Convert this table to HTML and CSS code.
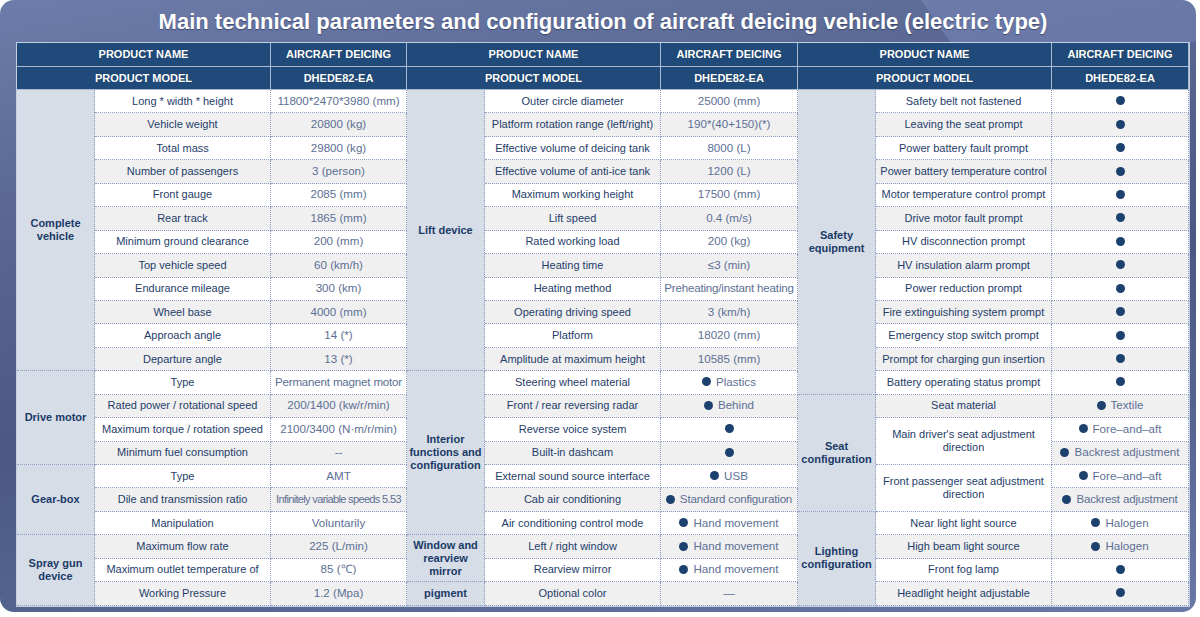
FILE: index.html
```html
<!DOCTYPE html>
<html lang="en">
<head>
<meta charset="utf-8">
<title>Aircraft deicing vehicle parameters</title>
<link rel="stylesheet" href="styles.css">
</head>
<body>
<div class="panel">
  <h1 class="title">Main technical parameters and configuration of aircraft deicing vehicle (electric type)</h1>
  <div class="spec">
    <div class="hd s-2">PRODUCT NAME</div><div class="hd">AIRCRAFT DEICING</div>
    <div class="hd s-2">PRODUCT NAME</div><div class="hd">AIRCRAFT DEICING</div>
    <div class="hd s-2">PRODUCT NAME</div><div class="hd">AIRCRAFT DEICING</div>
    <div class="hd s-2">PRODUCT MODEL</div><div class="hd">DHEDE82-EA</div>
    <div class="hd s-2">PRODUCT MODEL</div><div class="hd">DHEDE82-EA</div>
    <div class="hd s-2">PRODUCT MODEL</div><div class="hd">DHEDE82-EA</div>

    <!-- row 1 -->
    <div class="cat r12">Complete<br>vehicle</div><div class="nm">Long * width * height</div><div class="vl">11800*2470*3980 (mm)</div>
    <div class="cat r12">Lift device</div><div class="nm">Outer circle diameter</div><div class="vl">25000 (mm)</div>
    <div class="cat r13">Safety<br>equipment</div><div class="nm">Safety belt not fastened</div><div class="vl"><span class="dot"></span></div>
    <!-- row 2 -->
    <div class="nm g">Vehicle weight</div><div class="vl g">20800 (kg)</div>
    <div class="nm g">Platform rotation range (left/right)</div><div class="vl g">190*(40+150)(*)</div>
    <div class="nm g">Leaving the seat prompt</div><div class="vl g"><span class="dot"></span></div>
    <!-- row 3 -->
    <div class="nm">Total mass</div><div class="vl">29800 (kg)</div>
    <div class="nm">Effective volume of deicing tank</div><div class="vl">8000 (L)</div>
    <div class="nm">Power battery fault prompt</div><div class="vl"><span class="dot"></span></div>
    <!-- row 4 -->
    <div class="nm g">Number of passengers</div><div class="vl g">3 (person)</div>
    <div class="nm g">Effective volume of anti-ice tank</div><div class="vl g">1200 (L)</div>
    <div class="nm g">Power battery temperature control</div><div class="vl g"><span class="dot"></span></div>
    <!-- row 5 -->
    <div class="nm">Front gauge</div><div class="vl">2085 (mm)</div>
    <div class="nm">Maximum working height</div><div class="vl">17500 (mm)</div>
    <div class="nm">Motor temperature control prompt</div><div class="vl"><span class="dot"></span></div>
    <!-- row 6 -->
    <div class="nm g">Rear track</div><div class="vl g">1865 (mm)</div>
    <div class="nm g">Lift speed</div><div class="vl g">0.4 (m/s)</div>
    <div class="nm g">Drive motor fault prompt</div><div class="vl g"><span class="dot"></span></div>
    <!-- row 7 -->
    <div class="nm">Minimum ground clearance</div><div class="vl">200 (mm)</div>
    <div class="nm">Rated working load</div><div class="vl">200 (kg)</div>
    <div class="nm">HV disconnection prompt</div><div class="vl"><span class="dot"></span></div>
    <!-- row 8 -->
    <div class="nm g">Top vehicle speed</div><div class="vl g">60 (km/h)</div>
    <div class="nm g">Heating time</div><div class="vl g">≤3 (min)</div>
    <div class="nm g">HV insulation alarm prompt</div><div class="vl g"><span class="dot"></span></div>
    <!-- row 9 -->
    <div class="nm">Endurance mileage</div><div class="vl">300 (km)</div>
    <div class="nm">Heating method</div><div class="vl tight">Preheating/instant heating</div>
    <div class="nm">Power reduction prompt</div><div class="vl"><span class="dot"></span></div>
    <!-- row 10 -->
    <div class="nm g">Wheel base</div><div class="vl g">4000 (mm)</div>
    <div class="nm g">Operating driving speed</div><div class="vl g">3 (km/h)</div>
    <div class="nm g">Fire extinguishing system prompt</div><div class="vl g"><span class="dot"></span></div>
    <!-- row 11 -->
    <div class="nm">Approach angle</div><div class="vl">14 (*)</div>
    <div class="nm">Platform</div><div class="vl">18020 (mm)</div>
    <div class="nm">Emergency stop switch prompt</div><div class="vl"><span class="dot"></span></div>
    <!-- row 12 -->
    <div class="nm g">Departure angle</div><div class="vl g">13 (*)</div>
    <div class="nm g">Amplitude at maximum height</div><div class="vl g">10585 (mm)</div>
    <div class="nm g">Prompt for charging gun insertion</div><div class="vl g"><span class="dot"></span></div>
    <!-- row 13 -->
    <div class="cat r4">Drive motor</div><div class="nm">Type</div><div class="vl tight">Permanent magnet motor</div>
    <div class="cat r7">Interior<br>functions and<br>configuration</div><div class="nm">Steering wheel material</div><div class="vl"><span class="dot lead"></span>Plastics</div>
    <div class="nm">Battery operating status prompt</div><div class="vl"><span class="dot"></span></div>
    <!-- row 14 -->
    <div class="nm g">Rated power / rotational speed</div><div class="vl g">200/1400 (kw/r/min)</div>
    <div class="nm g">Front / rear reversing radar</div><div class="vl g"><span class="dot lead"></span>Behind</div>
    <div class="cat r5">Seat<br>configuration</div><div class="nm g">Seat material</div><div class="vl g"><span class="dot lead"></span>Textile</div>
    <!-- row 15 -->
    <div class="nm">Maximum torque / rotation speed</div><div class="vl">2100/3400 (N·m/r/min)</div>
    <div class="nm">Reverse voice system</div><div class="vl"><span class="dot"></span></div>
    <div class="nm r2">Main driver's seat adjustment direction</div><div class="vl"><span class="dot lead"></span>Fore–and–aft</div>
    <!-- row 16 -->
    <div class="nm g">Minimum fuel consumption</div><div class="vl g">--</div>
    <div class="nm g">Built-in dashcam</div><div class="vl g"><span class="dot"></span></div>
    <div class="vl g"><span class="dot lead"></span>Backrest adjustment</div>
    <!-- row 17 -->
    <div class="cat r3">Gear-box</div><div class="nm">Type</div><div class="vl">AMT</div>
    <div class="nm">External sound source interface</div><div class="vl"><span class="dot lead"></span>USB</div>
    <div class="nm r2">Front passenger seat adjustment direction</div><div class="vl"><span class="dot lead"></span>Fore–and–aft</div>
    <!-- row 18 -->
    <div class="nm g">Dile and transmission ratio</div><div class="vl g narrow">Infinitely variable speeds 5.53</div>
    <div class="nm g">Cab air conditioning</div><div class="vl g tight"><span class="dot lead"></span>Standard configuration</div>
    <div class="vl g tight"><span class="dot lead"></span>Backrest adjustment</div>
    <!-- row 19 -->
    <div class="nm">Manipulation</div><div class="vl">Voluntarily</div>
    <div class="nm">Air conditioning control mode</div><div class="vl"><span class="dot lead"></span>Hand movement</div>
    <div class="cat r4">Lighting<br>configuration</div><div class="nm">Near light light source</div><div class="vl"><span class="dot lead"></span>Halogen</div>
    <!-- row 20 -->
    <div class="cat r3">Spray gun<br>device</div><div class="nm g">Maximum flow rate</div><div class="vl g">225 (L/min)</div>
    <div class="cat r2">Window and<br>rearview<br>mirror</div><div class="nm g">Left / right window</div><div class="vl g"><span class="dot lead"></span>Hand movement</div>
    <div class="nm g">High beam light source</div><div class="vl g"><span class="dot lead"></span>Halogen</div>
    <!-- row 21 -->
    <div class="nm">Maximum outlet temperature of</div><div class="vl">85 (℃)</div>
    <div class="nm">Rearview mirror</div><div class="vl"><span class="dot lead"></span>Hand movement</div>
    <div class="nm">Front fog lamp</div><div class="vl"><span class="dot"></span></div>
    <!-- row 22 -->
    <div class="nm g">Working Pressure</div><div class="vl g">1.2 (Mpa)</div>
    <div class="cat">pigment</div><div class="nm g">Optional color</div><div class="vl g">—</div>
    <div class="nm g">Headlight height adjustable</div><div class="vl g"><span class="dot"></span></div>
  </div>
</div>
</body>
</html>
```

FILE: styles.css
```css
* { box-sizing: border-box; }
html, body { margin: 0; padding: 0; background: #ffffff; }
body { font-family: "Liberation Sans", Arial, sans-serif; }

.panel {
  width: 1196px;
  height: 612px;
  border-radius: 14px;
  padding: 0 6px 0 16px;
  background:
    linear-gradient(55deg, rgba(0,0,0,0) 0%, rgba(0,0,0,0) 77.5%, rgba(120,135,185,0.55) 77.6%, rgba(120,135,185,0.55) 100%) top / 100% 42px no-repeat,
    linear-gradient(170deg, #6e7cab 0%, #5a6893 25%, #4a5883 55%, #55638f 75%, #6a78a7 100%);
  display: flex;
  flex-direction: column;
}

.title {
  margin: 0;
  height: 42px;
  line-height: 44px;
  text-align: center;
  color: #ffffff;
  font-size: 22px;
  font-weight: bold;
  text-shadow: 0 1px 1px rgba(20,30,60,0.5);
  white-space: nowrap;
}

.spec {
  display: grid;
  grid-template-columns: 78px 176px 136px 78px 176px 137px 78px 176px 137px;
  grid-template-rows: 24px 23px repeat(22, 23.45px);
  border: 1px solid #c3cde0;
  background: #ffffff;
  width: 1174px;
}

.spec > div {
  display: flex;
  align-items: center;
  justify-content: center;
  text-align: center;
  font-size: 11px;
  line-height: 13px;
  border-right: 1px dotted #8d9dbf;
  border-bottom: 1px dotted #8d9dbf;
}

.spec > .hd {
  background: #1f4a79;
  color: #ffffff;
  font-weight: bold;
  font-size: 11px;
  border-right: 1px solid #a9b9d2;
  border-bottom: 1px solid #a9b9d2;
  text-shadow: 0 0 1px rgba(0,0,0,0.3);
}

.s-2 { grid-column: span 2; }
.r2 { grid-row: span 2; }
.r3 { grid-row: span 3; }
.r4 { grid-row: span 4; }
.r5 { grid-row: span 5; }
.r7 { grid-row: span 7; }
.r12 { grid-row: span 12; }
.r13 { grid-row: span 13; }

.spec > .cat {
  background: #d6dde7;
  color: #1a3a66;
  font-weight: bold;
  font-size: 11px;
}

.nm { color: #1f3d6a; background: #ffffff; }
.spec > .vl {
  color: #5c6f94;
  background: #ffffff;
  font-size: 11.6px;
  line-height: 12px;
  padding-bottom: 1px;
  white-space: nowrap;
}
.spec > .g { background: #f0f0f0; }

.spec > .tight { letter-spacing: -0.2px; }
.spec > .narrow { letter-spacing: -0.65px; font-size: 11px; }

.dot {
  display: inline-block;
  width: 9px;
  height: 9px;
  border-radius: 50%;
  background: #1d416e;
  flex: none;
}
.dot.lead { margin-right: 5px; }
```
